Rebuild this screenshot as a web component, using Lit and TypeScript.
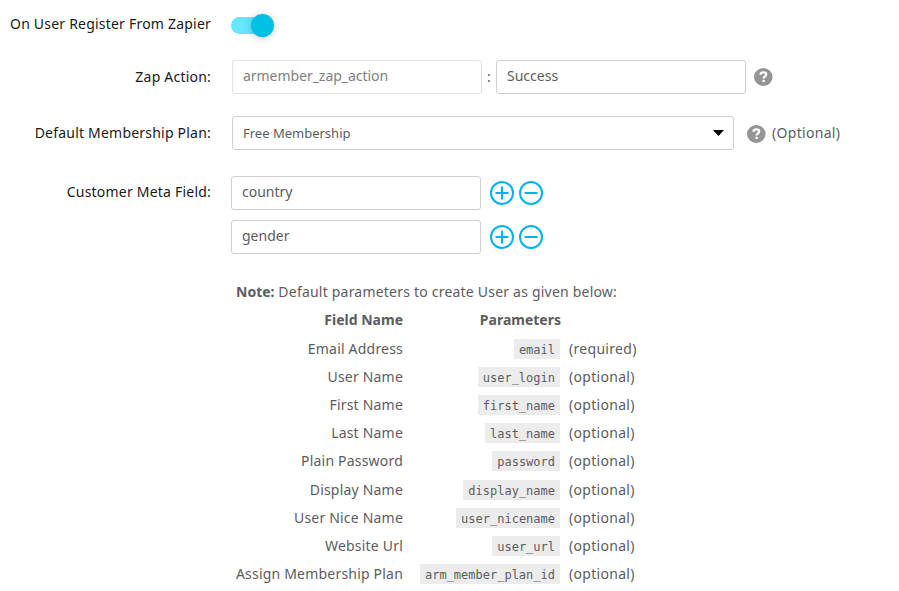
import { LitElement, html, css, svg } from "lit";
import { customElement } from "lit/decorators.js";

const PARAMS: [string, string, string][] = [
  ["Email Address", "email", "(required)"],
  ["User Name", "user_login", "(optional)"],
  ["First Name", "first_name", "(optional)"],
  ["Last Name", "last_name", "(optional)"],
  ["Plain Password", "password", "(optional)"],
  ["Display Name", "display_name", "(optional)"],
  ["User Nice Name", "user_nicename", "(optional)"],
  ["Website Url", "user_url", "(optional)"],
  ["Assign Membership Plan", "arm_member_plan_id", "(optional)"],
];

const helpIcon = html`<svg class="help" width="19" height="18" viewBox="0 0 19 18">
  <ellipse cx="9.3" cy="9" rx="9.3" ry="9" fill="#949494" />
  <path d="M6.3 6.7C6.7 5 7.9 4.4 9.4 4.4c1.7 0 2.8.8 2.8 2.1 0 1.8-2.6 1.9-2.6 4" fill="none" stroke="#fff" stroke-width="2.3" />
  <rect x="8.4" y="11.8" width="2.4" height="2.3" fill="#fff" />
</svg>`;

const circleButton = (plus: boolean) => html`<svg class="round" width="24" height="24" viewBox="0 0 24 24">
  <circle cx="12" cy="12" r="11" fill="none" stroke="#00b2f0" stroke-width="2" />
  <path d="M5.5 12h13" stroke="#00b2f0" stroke-width="2" />
  ${plus ? svg`<path d="M12 5.5v13" stroke="#00b2f0" stroke-width="2" />` : ""}
</svg>`;

@customElement("app-root")
export class AppRoot extends LitElement {
  static styles = css`
    :host {
      display: block;
      width: 899px;
      height: 591px;
      overflow: hidden;
      background: #fff;
      color: #5c5c60;
      font: 14px/20px "Noto Sans", "Open Sans", sans-serif;
    }
    * { box-sizing: border-box; }
    svg { display: block; flex: none; }
    .row { display: flex; height: 34px; margin-bottom: 22px; }
    .row.first { margin: 8px 0 18px; }
    .row.plan { margin-bottom: 26px; }
    .row.meta { height: 78px; margin-bottom: 24px; }
    .label { width: 211px; flex: none; text-align: right; color: #191919; line-height: 32px; white-space: nowrap; letter-spacing: 0.21px; }
    .plan .label, .zap .label { line-height: 34px; }
    .content { display: flex; align-items: center; margin-left: 21px; }
    .track { width: 42px; height: 17px; border-radius: 9px; background: #66e5fb; margin: 1px 0 0 -1px; display: flex; align-items: center; justify-content: flex-end; }
    .knob { width: 23px; height: 23px; border-radius: 50%; background: #00c0e4; margin-right: -1px; flex: none; box-shadow: 0 1px 7px rgba(0, 0, 0, 0.22); }
    .field { width: 250px; height: 34px; border: 1px solid #cfcfd3; border-radius: 3px; padding: 0 10px; line-height: 30px; }
    .disabled { border-color: #e1e1ea; color: #808080; letter-spacing: -0.04px; }
    .colon { width: 14px; text-align: center; }
    .help { margin-left: 8px; }
    .select { width: 502px; display: flex; align-items: center; justify-content: space-between; font-size: 13px; line-height: 32px; padding-right: 9px; }
    .select + .help { margin-left: 13px; margin-top: 1px; }
    .opt { margin-left: 6px; letter-spacing: 0.3px; }
    .metas { display: flex; flex-direction: column; gap: 10px; margin-left: 20px; }
    .line { display: flex; align-items: center; }
    .round { margin-left: 5px; }
    .field + .round { margin-left: 9px; }
    .note { margin-left: 236px; line-height: 28px; height: 28px; letter-spacing: 0.21px; }
    .note b { letter-spacing: 0; }
    .note, .table { white-space: nowrap; }
    .table { margin-left: 203px; }
    .tr { display: grid; grid-template-columns: 200px 157px 100px; height: 28px; line-height: 28px; text-align: right; letter-spacing: 0.2px; }
    .tr:nth-child(6) { height: 29px; }
    .head { font-weight: 700; height: 29px; letter-spacing: 0; }
    .param { display: flex; justify-content: flex-end; align-items: flex-start; }
    .head .param { margin-right: -1px; }
    .req { text-align: left; padding-left: 9px; letter-spacing: 0.3px; }
    code { font: 12px/20px "DejaVu Sans Mono", monospace; letter-spacing: 0; height: 20px; margin-top: 4px; padding: 1px 5px 0; background: #ececec; }
  `;

  render() {
    return html`
      <div class="row first">
        <div class="label">On User Register From Zapier</div>
        <div class="content"><div class="track"><div class="knob"></div></div></div>
      </div>
      <div class="row zap">
        <div class="label">Zap Action:</div>
        <div class="content">
          <div class="field disabled">armember_zap_action</div>
          <div class="colon">:</div>
          <div class="field">Success</div>
          ${helpIcon}
        </div>
      </div>
      <div class="row plan">
        <div class="label">Default Membership Plan:</div>
        <div class="content">
          <div class="field select">
            <span>Free Membership</span>
            <svg width="11" height="6" viewBox="0 0 11 6"><path d="M0 0h11L5.5 6z" fill="#000" /></svg>
          </div>
          ${helpIcon}
          <span class="opt">(Optional)</span>
        </div>
      </div>
      <div class="row meta">
        <div class="label">Customer Meta Field:</div>
        <div class="metas">
          ${["country", "gender"].map(
            (name) => html`<div class="line"><div class="field">${name}</div>${circleButton(true)}${circleButton(false)}</div>`
          )}
        </div>
      </div>
      <div class="note"><b>Note:</b> Default parameters to create User as given below:</div>
      <div class="table">
        <div class="tr head"><div>Field Name</div><div class="param">Parameters</div></div>
        ${PARAMS.map(
          ([name, key, req]) => html`<div class="tr"><div>${name}</div><div class="param"><code>${key}</code></div><div class="req">${req}</div></div>`
        )}
      </div>
    `;
  }
}
